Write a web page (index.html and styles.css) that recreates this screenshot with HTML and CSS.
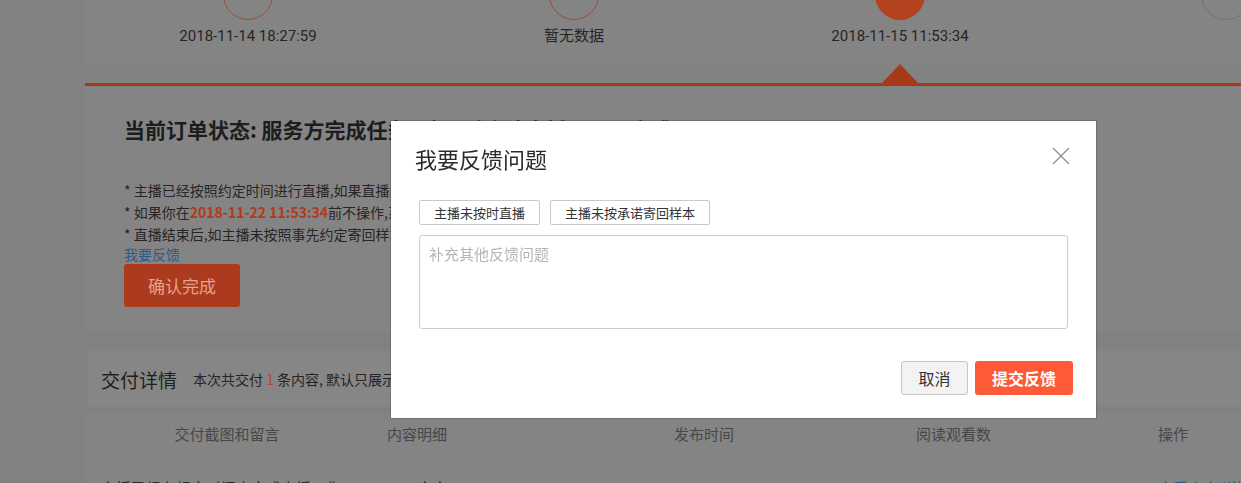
FILE: index.html
```html
<!DOCTYPE html>
<html lang="zh-CN">
<head>
    <meta charset="UTF-8">
    <meta name="viewport" content="width=device-width, initial-scale=1.0">
    <title>订单详情 - 我要反馈</title>
    <link rel="stylesheet" href="styles.css">
</head>
<body>
    <div class="page">
        <div class="steps">
            <div class="step done">
                <span class="circle"></span>
                <div class="step-time">2018-11-14 18:27:59</div>
            </div>
            <div class="step done">
                <span class="circle"></span>
                <div class="step-time">暂无数据</div>
            </div>
            <div class="step current">
                <span class="circle"></span>
                <div class="step-time">2018-11-15 11:53:34</div>
            </div>
            <div class="step todo">
                <span class="circle"></span>
                <div class="step-time"></div>
            </div>
        </div>
        <div class="track">
            <span></span><span></span><span class="arrow"></span><span></span>
        </div>

        <div class="status">
            <h2 class="status-title">当前订单状态: 服务方完成任务, 请及时确认直播是否已完成</h2>
            <ul class="tips">
                <li>* 主播已经按照约定时间进行直播,如果直播内容没有问题,请点击确认完成</li>
                <li>* 如果你在<b class="deadline">2018-11-22 11:53:34</b>前不操作,系统将自动确认完成</li>
                <li>* 直播结束后,如主播未按照事先约定寄回样本,请及时反馈</li>
            </ul>
            <a class="feedback-link" href="#">我要反馈</a>
            <button class="btn-confirm">确认完成</button>
        </div>

        <div class="delivery-head">
            <span class="delivery-title">交付详情</span>
            <span class="delivery-sub">本次共交付 <em>1</em> 条内容, 默认只展示最新的交付内容</span>
        </div>

        <div class="delivery-table">
            <div class="row head">
                <div class="c1">交付截图和留言</div>
                <div class="c2">内容明细</div>
                <div class="c3">发布时间</div>
                <div class="c4">阅读观看数</div>
                <div class="c5">操作</div>
            </div>
            <div class="row body">
                <div class="c1">主播已经在规定时间内完成直播，你</div>
                <div class="c2"><span class="indent">哈哈</span></div>
                <div class="c3"></div>
                <div class="c4">2</div>
                <div class="c5"><a href="#">查看内容</a> <a href="#">详情</a></div>
            </div>
        </div>
    </div>

    <div class="modal">
        <div class="modal-head">
            <h3>我要反馈问题</h3>
            <svg class="close" width="18" height="18" viewBox="0 0 18 18">
                <path d="M1 1 L17 17 M17 1 L1 17" stroke="#8f8f8f" stroke-width="1.3" fill="none"/>
            </svg>
        </div>
        <div class="modal-body">
            <div class="tags">
                <button class="tag">主播未按时直播</button>
                <button class="tag">主播未按承诺寄回样本</button>
            </div>
            <textarea class="remark" placeholder="补充其他反馈问题"></textarea>
        </div>
        <div class="modal-foot">
            <button class="btn-cancel">取消</button>
            <button class="btn-submit">提交反馈</button>
        </div>
    </div>
</body>
</html>
```

FILE: styles.css
```css
* { box-sizing: border-box; margin: 0; padding: 0; }
html, body { height: 100%; overflow: hidden; }
body { font-family: "Noto Sans CJK SC", "Noto Sans", sans-serif; background: #818181; color: #2a2a2a; }

/* page under the mask, already dimmed */
.page { margin-left: 85px; margin-top: -30px; width: 1300px; }

.steps { display: grid; grid-template-columns: repeat(4, 326px); background: #848484; height: 93px; }
.step { display: flex; flex-direction: column; align-items: center; }
.circle { width: 50px; height: 50px; border-radius: 50%; border: 1px solid #9c4a3b; }
.step.current .circle { background: #b3421f; border-color: #b3421f; }
.step.todo .circle { border-color: #727272; }
.step-time { margin-top: 6px; font-family: Roboto, "Noto Sans CJK SC", sans-serif; font-size: 15px; line-height: 20px; color: #262626; }

.track { display: grid; grid-template-columns: repeat(4, 326px); height: 23px; border-bottom: 3px solid #a63a18; background: #828282; align-items: end; }
.track span { display: block; }
.track .arrow { justify-self: center; width: 0; height: 0; border-left: 18px solid transparent; border-right: 18px solid transparent; border-bottom: 19px solid #a63a18; }

.status { background: #848484; padding: 27px 39px 24px; margin-top: 1px; }
.status-title { font-size: 21px; line-height: 30px; font-weight: bold; color: #1d1d1d; white-space: nowrap; }
.tips { list-style: none; margin-top: 35px; font-size: 14px; line-height: 22px; color: #262626; white-space: nowrap; }
.deadline { color: #b23a1b; font-weight: bold; }
.feedback-link { display: block; font-size: 14px; line-height: 18px; color: #2a5a88; text-decoration: none; }
.btn-confirm { margin-top: 1px; width: 116px; height: 43px; border: none; border-radius: 3px; background: #ac3a1e; color: #e3a390; font-family: inherit; font-size: 17px; }

.delivery-head { margin-top: 20px; margin-left: 3px; height: 56px; background: #868686; display: flex; align-items: center; padding-left: 13px; }
.delivery-title { font-size: 19px; color: #1f1f1f; }
.delivery-sub { margin-left: 16px; font-size: 14px; color: #242424; }
.delivery-sub em { font-style: normal; color: #b04a3c; }

.delivery-table { margin-top: 7px; background: #848484; }
.row { display: grid; grid-template-columns: 284px 287px 242px 242px 1fr; }
.row.head { height: 38px; align-items: center; font-size: 15px; color: #474747; }
.row.head .c1 { text-align: center; }
.row.head .c2, .row.head .c3, .row.head .c4, .row.head .c5 { padding-left: 18px; }
.row.body { padding-top: 25px; font-size: 15px; color: #2a2a2a; }
.row.body .c1 { padding-left: 16px; }
.row.body .c2 { padding-left: 46px; }
.row.body .c4, .row.body .c5 { padding-left: 18px; }
.row.body a { color: #2a5a88; text-decoration: none; }

/* feedback dialog */
.modal { position: fixed; left: 391px; top: 121px; width: 705px; height: 297px; background: #fff; box-shadow: 0 0 0 1px rgba(0, 0, 0, 0.15); }
.modal-head { display: flex; justify-content: space-between; align-items: center; padding: 22px 26px 0 24px; }
.modal-head h3 { font-size: 22px; line-height: 30px; font-weight: normal; color: #2b2b2b; }
.close { margin-top: -4px; }
.modal-body { padding: 27px 28px 0; }
.tags { display: flex; gap: 10px; }
.tag { height: 25px; padding: 0 14px; border: 1px solid #c9c9c9; border-radius: 2px; background: #fff; font-family: inherit; font-size: 13px; color: #333; }
.remark { display: block; margin-top: 10px; width: 649px; height: 94px; padding: 6px 9px; border: 1px solid #cdcdcd; border-radius: 3px; resize: none; font-family: inherit; font-size: 15px; line-height: 24px; }
.remark::placeholder { color: #b5b5b5; }
.modal-foot { display: flex; justify-content: flex-end; gap: 7px; padding: 32px 23px 0; }
.btn-cancel { width: 67px; height: 34px; border: 1px solid #c6c6c6; border-radius: 3px; background: #f3f3f3; font-family: inherit; font-size: 16px; color: #333; }
.btn-submit { width: 98px; height: 34px; border: none; border-radius: 3px; background: #fd5a38; font-family: inherit; font-size: 16px; font-weight: bold; color: #fff; }
```
